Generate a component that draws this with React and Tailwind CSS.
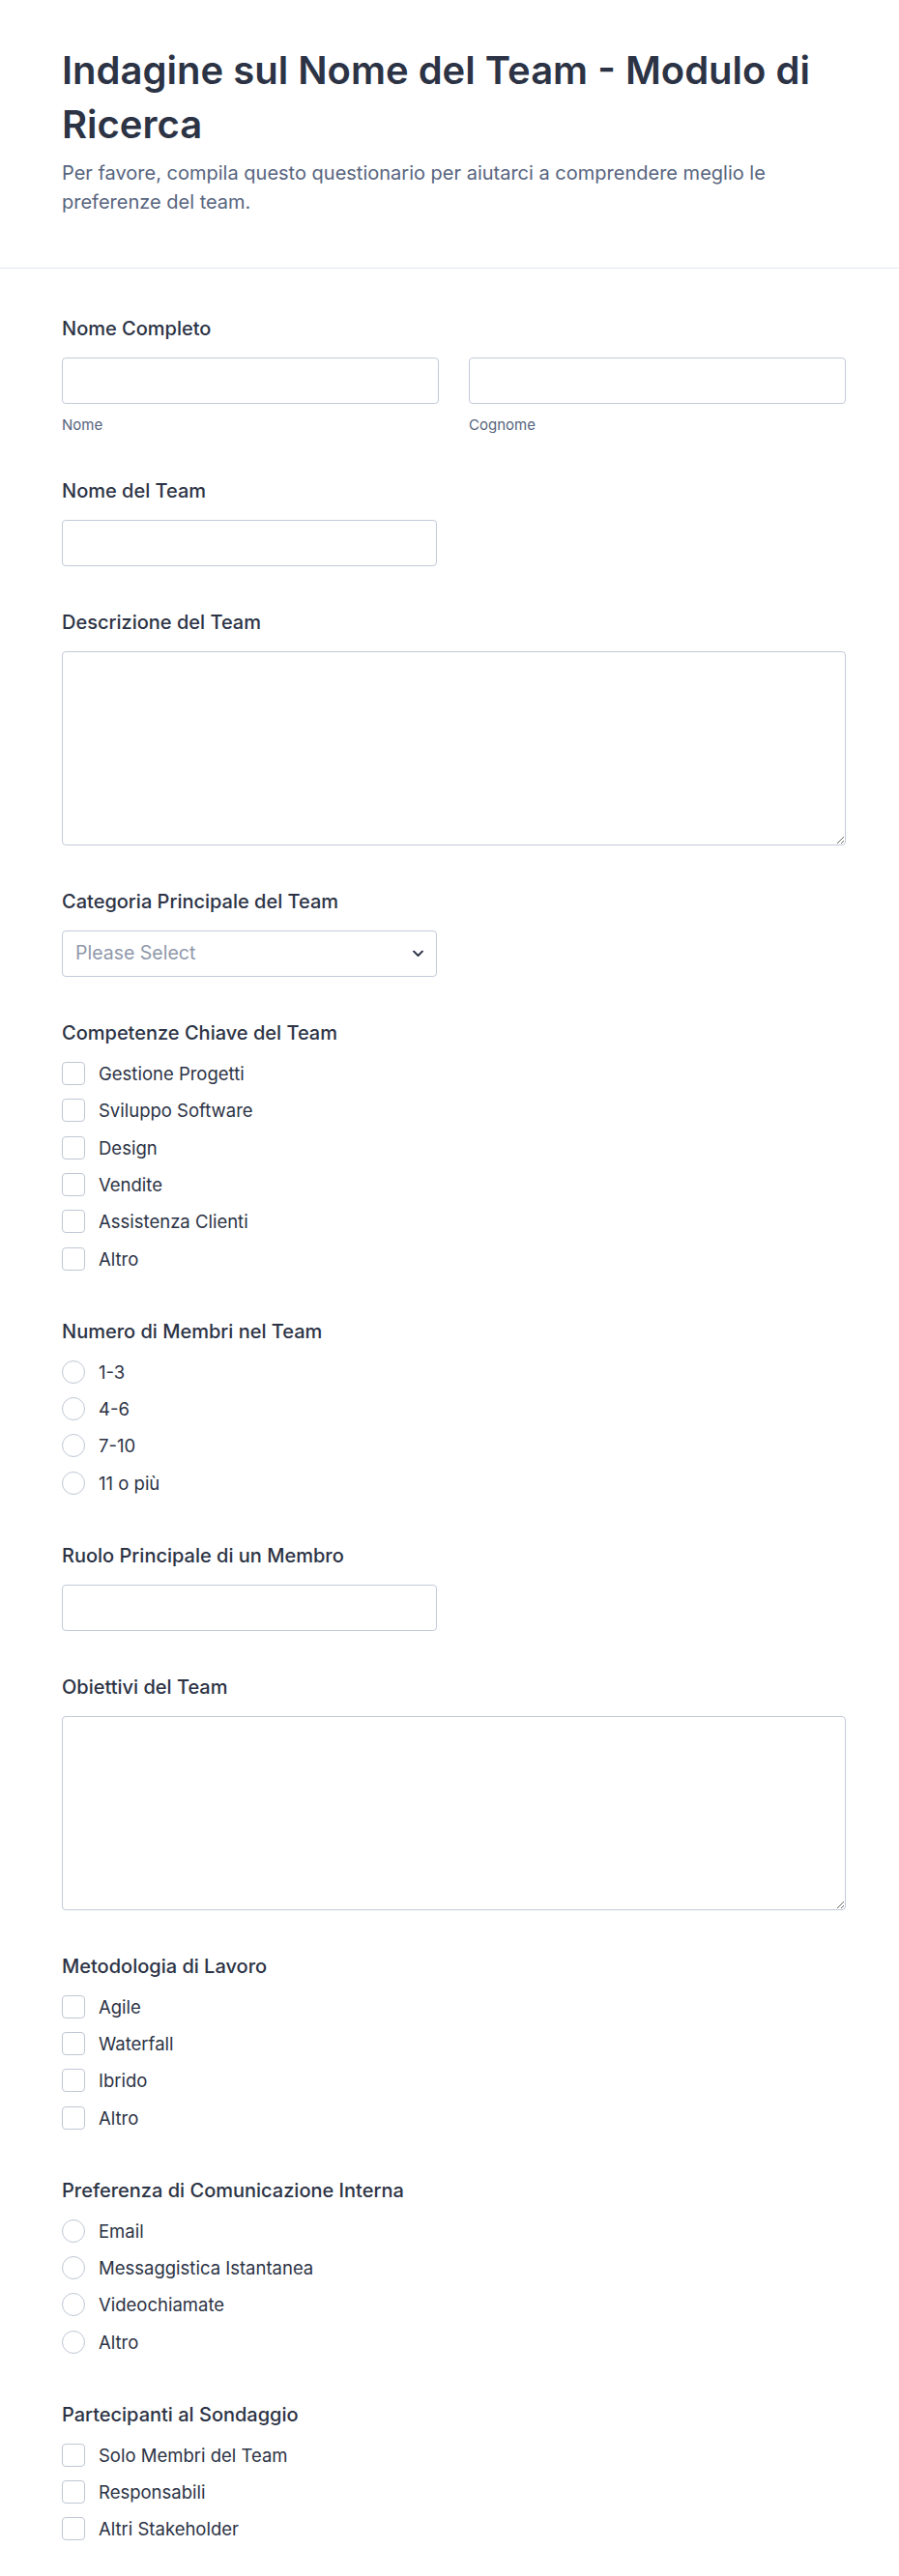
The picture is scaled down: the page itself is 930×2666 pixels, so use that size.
const skills = ['Gestione Progetti', 'Sviluppo Software', 'Design', 'Vendite', 'Assistenza Clienti', 'Altro'];
const members = ['1-3', '4-6', '7-10', '11 o più'];
const methods = ['Agile', 'Waterfall', 'Ibrido', 'Altro'];
const comms = ['Email', 'Messaggistica Istantanea', 'Videochiamate', 'Altro'];
const participants = ['Solo Membri del Team', 'Responsabili', 'Altri Stakeholder'];

const inputCls =
  'h-12 w-full rounded-[4px] border border-[#c3cad8] bg-white px-[13px] text-[19px] text-[#2c3345] outline-none';

const Field = ({ label, children }) => (
  <div className="flex flex-col">
    <label className="text-[20px] leading-6 font-medium text-[#2c3345]">{label}</label>
    <div className="mt-[18px]">{children}</div>
  </div>
);

const OptionList = ({ name, items, type }) => (
  <div className="flex flex-col gap-y-[14.33px] pb-[5px]">
    {items.map((item) => (
      <label key={item} className="flex h-6 items-center gap-[14px]">
        <input
          type={type}
          name={name}
          className={`h-6 w-6 shrink-0 appearance-none border border-[#c0c7d4] bg-white ${
            type === 'radio' ? 'rounded-full' : 'rounded-[4px]'
          }`}
        />
        <span className="text-[18.5px] leading-6 text-[#2c3345]">{item}</span>
      </label>
    ))}
  </div>
);

const App = () => {
  return (
    <div className="min-h-screen bg-white font-['Inter',sans-serif]">
      {/* Header */}
      <header className="border-b border-[#e2e6ee] pl-16 pr-[55px] pt-[45px] pb-[53px]">
        <h1 className="text-[40px] leading-[56px] font-semibold text-[#2c3345]">
          Indagine sul Nome del Team - Modulo di Ricerca
        </h1>
        <p className="mt-[7px] text-[20px] leading-[30px] text-[#57647e]">
          Per favore, compila questo questionario per aiutarci a comprendere meglio le preferenze del team.
        </p>
      </header>

      {/* Form */}
      <form className="flex flex-col gap-[46px] pl-16 pr-[55px] pt-[50px] pb-10">
        <Field label="Nome Completo">
          <div className="grid grid-cols-2 gap-x-[31px]">
            <div className="flex flex-col">
              <input type="text" className={inputCls} />
              <span className="mt-3 text-[15px] leading-5 text-[#57647e]">Nome</span>
            </div>
            <div className="flex flex-col">
              <input type="text" className={inputCls} />
              <span className="mt-3 text-[15px] leading-5 text-[#57647e]">Cognome</span>
            </div>
          </div>
        </Field>

        <Field label="Nome del Team">
          <div className="w-[388px]">
            <input type="text" className={inputCls} />
          </div>
        </Field>

        <Field label="Descrizione del Team">
          <textarea className="block h-[201px] w-full rounded-[4px] border border-[#c3cad8] bg-white p-3 text-[19px] outline-none" />
        </Field>

        <Field label="Categoria Principale del Team">
          <div className="relative w-[388px]">
            <select
              defaultValue=""
              className="h-12 w-full appearance-none rounded-[4px] border border-[#c3cad8] bg-white pl-[13px] pr-10 text-[19.5px] text-[#8f98aa] outline-none"
            >
              <option value="" disabled>
                Please Select
              </option>
            </select>
            <svg
              width="11"
              height="7"
              viewBox="0 0 11 7"
              fill="none"
              className="pointer-events-none absolute right-[14px] top-1/2 -translate-y-1/2"
            >
              <path d="M1 1l4.5 4.5L10 1" stroke="#2c3345" strokeWidth="1.8" strokeLinecap="round" strokeLinejoin="round" />
            </svg>
          </div>
        </Field>

        <Field label="Competenze Chiave del Team">
          <OptionList name="skills" items={skills} type="checkbox" />
        </Field>

        <Field label="Numero di Membri nel Team">
          <OptionList name="members" items={members} type="radio" />
        </Field>

        <Field label="Ruolo Principale di un Membro">
          <div className="w-[388px]">
            <input type="text" className={inputCls} />
          </div>
        </Field>

        <Field label="Obiettivi del Team">
          <textarea className="block h-[201px] w-full rounded-[4px] border border-[#c3cad8] bg-white p-3 text-[19px] outline-none" />
        </Field>

        <Field label="Metodologia di Lavoro">
          <OptionList name="method" items={methods} type="checkbox" />
        </Field>

        <Field label="Preferenza di Comunicazione Interna">
          <OptionList name="comms" items={comms} type="radio" />
        </Field>

        <Field label="Partecipanti al Sondaggio">
          <OptionList name="participants" items={participants} type="checkbox" />
        </Field>
      </form>
    </div>
  );
};

export default App;
